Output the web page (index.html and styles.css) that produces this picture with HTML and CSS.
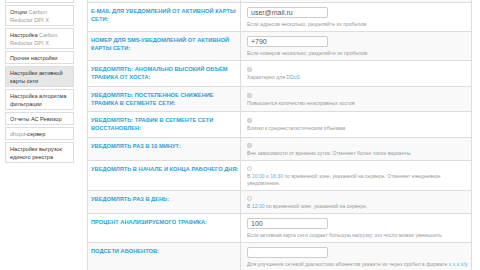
FILE: index.html
```html
<!DOCTYPE html>
<html lang="ru">
<head>
    <meta charset="UTF-8">
    <meta name="viewport" content="width=device-width, initial-scale=1.0">
    <title>Настройки активной карты сети</title>
    <link rel="stylesheet" href="styles.css">
</head>
<body>
    <div class="page">
        <div class="sidebar">
            <a class="nav-item" href="#">Мониторинг</a>
            <a class="nav-item" href="#">Опции <span class="muted">Carbon Reductor DPI X</span></a>
            <a class="nav-item" href="#">Настройка <span class="muted">Carbon Reductor DPI X</span></a>
            <a class="nav-item" href="#">Прочие настройки</a>
            <a class="nav-item active" href="#">Настройки активной карты сети</a>
            <a class="nav-item" href="#">Настройка алгоритма фильтрации</a>
            <a class="nav-item" href="#">Отчеты АС Ревизор</a>
            <a class="nav-item" href="#"><span class="muted">dhcpd</span>-сервер</a>
            <a class="nav-item" href="#">Настройки выгрузок единого реестра</a>
        </div>

        <div class="content">
            <table class="settings">
                <colgroup>
                    <col class="col-label">
                    <col>
                </colgroup>
                <tr>
                    <td class="label">Включить уведомления:</td>
                    <td class="value">
                        <input type="checkbox" class="check" checked disabled>
                        <div class="help">Отправлять отчёты по почте</div>
                    </td>
                </tr>
                <tr>
                    <td class="label">E-mail для уведомлений от активной карты сети:</td>
                    <td class="value">
                        <input type="text" class="field" value="user@mail.ru">
                        <div class="help">Если адресов несколько, разделяйте их пробелом</div>
                    </td>
                </tr>
                <tr>
                    <td class="label">Номер для SMS-уведомлений от активной карты сети:</td>
                    <td class="value">
                        <input type="text" class="field" value="+790">
                        <div class="help">Если номеров несколько, разделяйте их пробелом</div>
                    </td>
                </tr>
                <tr>
                    <td class="label">Уведомлять: аномально высокий объём трафика от хоста:</td>
                    <td class="value">
                        <input type="checkbox" class="check" checked disabled>
                        <div class="help">Характерно для <a href="#">DDoS</a></div>
                    </td>
                </tr>
                <tr>
                    <td class="label">Уведомлять: постепенное снижение трафика в сегменте сети:</td>
                    <td class="value">
                        <input type="checkbox" class="check" checked disabled>
                        <div class="help">Повышается количество неисправных хостов</div>
                    </td>
                </tr>
                <tr>
                    <td class="label">Уведомлять: трафик в сегменте сети восстановлен:</td>
                    <td class="value">
                        <input type="checkbox" class="check" checked disabled>
                        <div class="help">Близко к среднестатистическим объёмам</div>
                    </td>
                </tr>
                <tr>
                    <td class="label">Уведомлять раз в 10 минут:</td>
                    <td class="value">
                        <input type="checkbox" class="check" checked disabled>
                        <div class="help">Вне зависимости от времени суток. Отменяет более тихие варианты.</div>
                    </td>
                </tr>
                <tr>
                    <td class="label">Уведомлять в начале и конца рабочего дня:</td>
                    <td class="value">
                        <input type="checkbox" class="check" disabled>
                        <div class="help">В <span class="time">10:00</span> и <span class="time">16:30</span> по временной зоне, указанной на сервере. Отменяет ежедневное уведомление.</div>
                    </td>
                </tr>
                <tr>
                    <td class="label">Уведомлять раз в день:</td>
                    <td class="value">
                        <input type="checkbox" class="check" disabled>
                        <div class="help">В <span class="time">12:00</span> по временной зоне, указанной на сервере.</div>
                    </td>
                </tr>
                <tr>
                    <td class="label">Процент анализируемого трафика:</td>
                    <td class="value">
                        <input type="text" class="field" value="100">
                        <div class="help">Если активная карта сети создает большую нагрузку, это число можно уменьшить</div>
                    </td>
                </tr>
                <tr>
                    <td class="label">Подсети абонентов:</td>
                    <td class="value">
                        <input type="text" class="field" value="">
                        <div class="help">Для улучшения сетевой диагностики абонентов укажите их через пробел в формате <span class="time">x.x.x.x/y</span>.</div>
                    </td>
                </tr>
            </table>
        </div>
    </div>
</body>
</html>
```

FILE: styles.css
```css
body {
    margin: 0;
    font-family: "Liberation Sans", Arial, sans-serif;
    background: #fff;
    color: #333;
}

/* страница прокручена немного вниз */
.page {
    display: flex;
    align-items: flex-start;
    margin-top: -21px;
    padding: 0 8px 0 5px;
}

.sidebar {
    width: 69px;
    flex-shrink: 0;
    margin-right: 13px;
    padding-top: 11px;
}

.nav-item {
    display: block;
    border: 1px solid #ddd;
    padding: 1.5px 4px;
    margin-bottom: 2px;
    font-size: 5.6px;
    line-height: 8px;
    color: #333;
    text-decoration: none;
}

.nav-item.active {
    background: #e6e6e6;
}

.muted {
    color: #999;
}

.content {
    flex: 1;
}

.settings {
    width: 100%;
    border-collapse: collapse;
    table-layout: fixed;
}

.col-label {
    width: 153px;
}

.settings td {
    border: 1px solid #ddd;
    vertical-align: top;
}

.settings tr:nth-child(odd) td {
    background: #f9f9f9;
}

.label {
    padding: 4px 0 4px 3px;
    font-size: 5.7px;
    font-weight: bold;
    line-height: 8.3px;
    color: #2a9fd6;
    text-transform: uppercase;
}

.value {
    padding: 4px 1px 3px 6px;
    vertical-align: middle !important;
}

.field {
    display: block;
    box-sizing: border-box;
    width: 81px;
    height: 11px;
    margin: 0;
    padding: 0 3px;
    border: 1px solid #ccc;
    border-radius: 2px;
    background: #fff;
    font-family: inherit;
    font-size: 7px;
    color: #555;
}

.check {
    display: block;
    width: 5px;
    height: 5px;
    margin: 1px 0 0;
}

.help {
    margin-top: 2px;
    font-size: 5.1px;
    line-height: 7px;
    color: #999;
}

.field + .help {
    margin-top: 3px;
}

.help a,
.help .time {
    color: #5bb0e0;
    text-decoration: none;
}
```
